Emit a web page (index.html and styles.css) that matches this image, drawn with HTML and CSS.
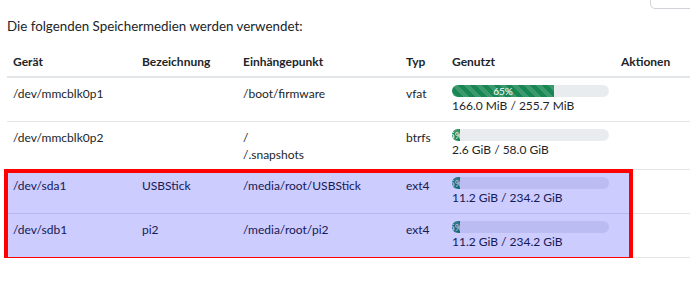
FILE: index.html
```html
<!DOCTYPE html>
<html lang="de">
<head>
<meta charset="utf-8">
<link rel="stylesheet" href="styles.css">
</head>
<body>
<div class="page">
  <div class="toolbar"><div class="tool-btn"></div></div>
  <p class="intro">Die folgenden Speichermedien werden verwendet:</p>
  <div class="table-wrap">
    <table class="disks">
      <colgroup>
        <col class="c-dev"><col class="c-name"><col class="c-mount"><col class="c-type"><col class="c-used"><col class="c-act">
      </colgroup>
      <thead>
        <tr><th>Gerät</th><th>Bezeichnung</th><th>Einhängepunkt</th><th>Typ</th><th>Genutzt</th><th>Aktionen</th></tr>
      </thead>
      <tbody>
        <tr>
          <td>/dev/mmcblk0p1</td><td></td><td>/boot/firmware</td><td>vfat</td>
          <td><div class="progress"><div class="bar" style="width:65%">65%</div></div><div>166.0 MiB / 255.7 MiB</div></td><td></td>
        </tr>
        <tr>
          <td>/dev/mmcblk0p2</td><td></td><td class="multi">/<br>/.snapshots</td><td>btrfs</td>
          <td><div class="progress"><div class="bar" style="width:5%">5%</div></div><div>2.6 GiB / 58.0 GiB</div></td><td></td>
        </tr>
        <tr>
          <td>/dev/sda1</td><td>USBStick</td><td>/media/root/USBStick</td><td>ext4</td>
          <td><div class="progress"><div class="bar" style="width:5%">5%</div></div><div>11.2 GiB / 234.2 GiB</div></td><td></td>
        </tr>
        <tr>
          <td>/dev/sdb1</td><td>pi2</td><td>/media/root/pi2</td><td>ext4</td>
          <td><div class="progress"><div class="bar" style="width:5%">5%</div></div><div>11.2 GiB / 234.2 GiB</div></td><td></td>
        </tr>
      </tbody>
    </table>
    <div class="highlight"></div>
  </div>
</div>
</body>
</html>
```

FILE: styles.css
```css
html, body {
  margin: 0;
  padding: 0;
  overflow: hidden;
  background: #fff;
}
body {
  font-family: Lato, "Open Sans", sans-serif;
  font-size: 12px;
  line-height: 17px;
  color: #212529;
}
.page {
  padding: 0 0 0 7px;
}
.toolbar {
  display: flex;
  justify-content: flex-end;
  height: 8px;
}
.tool-btn {
  margin-top: -30px;
  margin-right: -20px;
  width: 58px;
  height: 37px;
  border: 1px solid #d0d4d8;
  border-radius: 5px;
  flex: none;
}
.intro {
  margin: 10px 0 0 0;
  font-size: 13.35px;
}
.table-wrap {
  position: relative;
  margin-top: 11px;
}
.disks {
  width: 683px;
  table-layout: fixed;
  border-collapse: collapse;
}
.c-dev { width: 129px; }
.c-name { width: 101px; }
.c-mount { width: 163px; }
.c-type { width: 46px; }
.c-used { width: 169px; }
.c-act { width: 75px; }
.disks th, .disks td {
  text-align: left;
  vertical-align: top;
  padding: 7px 6px 7px;
}
.disks th {
  font-weight: 700;
  padding-bottom: 6px;
  border-bottom: 2px solid #e3e6e9;
}
.disks td {
  border-bottom: 1px solid #e3e6e9;
}
.disks td.multi {
  padding-bottom: 6px;
}
.progress {
  display: flex;
  height: 12px;
  background: #e9ecef;
  border-radius: 6px;
  overflow: hidden;
}
.bar {
  display: flex;
  justify-content: center;
  align-items: center;
  overflow: hidden;
  white-space: nowrap;
  color: #fff;
  font-size: 10px;
  line-height: 12px;
  background-color: #198754;
  background-image: linear-gradient(45deg, rgba(255,255,255,.15) 25%, transparent 25%, transparent 50%, rgba(255,255,255,.15) 50%, rgba(255,255,255,.15) 75%, transparent 75%, transparent);
  background-size: 12px 12px;
}
.highlight {
  position: absolute;
  left: -3px;
  top: 123px;
  width: 621px;
  height: 84px;
  border: 4px solid #ff0000;
  background: rgba(0, 0, 255, 0.2);
  pointer-events: none;
}
```
